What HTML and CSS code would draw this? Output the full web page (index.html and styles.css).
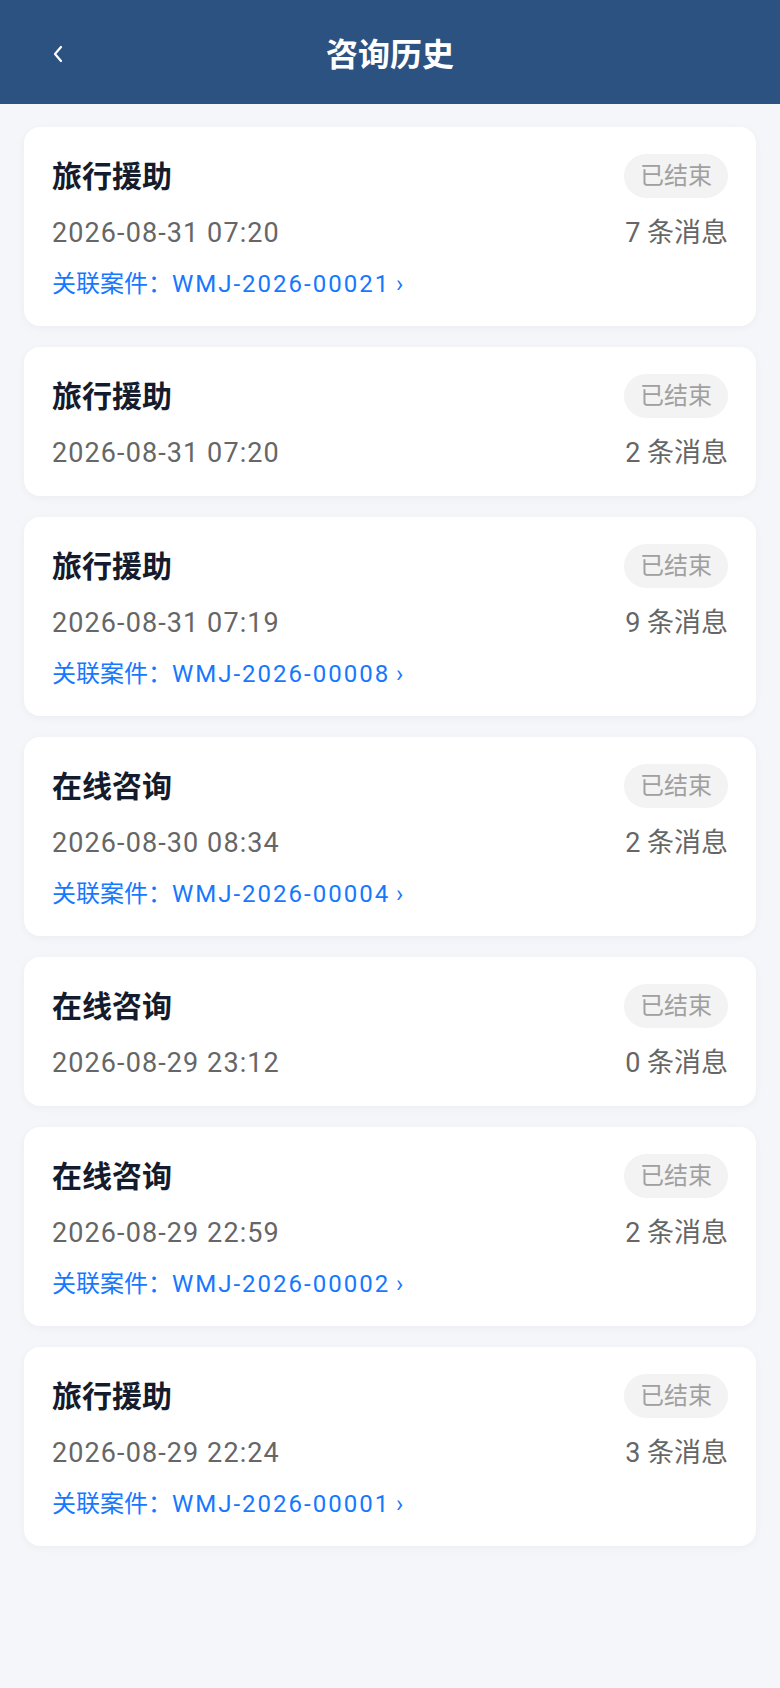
FILE: index.html
```html
<!DOCTYPE html>
<html lang="zh-CN">
<head>
  <meta charset="UTF-8">
  <meta name="viewport" content="width=device-width, initial-scale=1">
  <title>咨询历史</title>
  <link rel="stylesheet" href="styles.css">
</head>
<body>
  <header class="topbar">
    <a class="back" href="#">
      <svg width="12" height="18" viewBox="0 0 12 18"><polyline points="9,2 3,9 9,16" fill="none" stroke="#ffffff" stroke-width="2.2" stroke-linecap="round" stroke-linejoin="round"/></svg>
    </a>
    <h1>咨询历史</h1>
    <span></span>
  </header>

  <main class="list">
    <div class="card">
      <div class="card-head">
        <h2>旅行援助</h2>
        <span class="badge">已结束</span>
      </div>
      <div class="card-meta">
        <span class="time">2026-08-31 07:20</span>
        <span class="count">7 条消息</span>
      </div>
      <a class="case" href="#">关联案件：<span class="code">WMJ-2026-00021</span> ›</a>
    </div>

    <div class="card">
      <div class="card-head">
        <h2>旅行援助</h2>
        <span class="badge">已结束</span>
      </div>
      <div class="card-meta">
        <span class="time">2026-08-31 07:20</span>
        <span class="count">2 条消息</span>
      </div>
    </div>

    <div class="card">
      <div class="card-head">
        <h2>旅行援助</h2>
        <span class="badge">已结束</span>
      </div>
      <div class="card-meta">
        <span class="time">2026-08-31 07:19</span>
        <span class="count">9 条消息</span>
      </div>
      <a class="case" href="#">关联案件：<span class="code">WMJ-2026-00008</span> ›</a>
    </div>

    <div class="card">
      <div class="card-head">
        <h2>在线咨询</h2>
        <span class="badge">已结束</span>
      </div>
      <div class="card-meta">
        <span class="time">2026-08-30 08:34</span>
        <span class="count">2 条消息</span>
      </div>
      <a class="case" href="#">关联案件：<span class="code">WMJ-2026-00004</span> ›</a>
    </div>

    <div class="card">
      <div class="card-head">
        <h2>在线咨询</h2>
        <span class="badge">已结束</span>
      </div>
      <div class="card-meta">
        <span class="time">2026-08-29 23:12</span>
        <span class="count">0 条消息</span>
      </div>
    </div>

    <div class="card">
      <div class="card-head">
        <h2>在线咨询</h2>
        <span class="badge">已结束</span>
      </div>
      <div class="card-meta">
        <span class="time">2026-08-29 22:59</span>
        <span class="count">2 条消息</span>
      </div>
      <a class="case" href="#">关联案件：<span class="code">WMJ-2026-00002</span> ›</a>
    </div>

    <div class="card">
      <div class="card-head">
        <h2>旅行援助</h2>
        <span class="badge">已结束</span>
      </div>
      <div class="card-meta">
        <span class="time">2026-08-29 22:24</span>
        <span class="count">3 条消息</span>
      </div>
      <a class="case" href="#">关联案件：<span class="code">WMJ-2026-00001</span> ›</a>
    </div>
  </main>
</body>
</html>
```

FILE: styles.css
```css
body {
  margin: 0;
  background: #f5f6fa;
  font-family: Roboto, "Noto Sans CJK SC", sans-serif;
  min-height: 1688px;
}

.topbar {
  background: #2c5282;
  height: 104px;
  display: grid;
  grid-template-columns: 1fr auto 1fr;
  align-items: center;
  padding: 0 0 0 52px;
  box-sizing: border-box;
}

.back {
  display: flex;
  align-items: center;
  height: 18px;
  margin-top: 4px;
}

.topbar h1 {
  margin: 0;
  color: #ffffff;
  font-size: 32px;
  font-weight: 600;
  margin-left: -52px;
}

.list {
  padding: 23px 24px;
  display: flex;
  flex-direction: column;
  gap: 21px;
}

.card {
  background: #ffffff;
  border-radius: 16px;
  padding: 27px 28px 25px;
  box-shadow: 0 2px 8px rgba(20, 30, 60, 0.04);
}

.card-head {
  display: flex;
  justify-content: space-between;
  align-items: center;
  height: 44px;
}

.card-head h2 {
  margin: 0 0 5px;
  font-size: 30px;
  font-weight: 700;
  color: #141b2d;
}

.badge {
  background: #f3f3f3;
  color: #a0a0a0;
  font-size: 24px;
  height: 44px;
  line-height: 44px;
  padding: 0 16px;
  border-radius: 22px;
}

.card-meta {
  display: flex;
  justify-content: space-between;
  margin-top: 17px;
  line-height: 36px;
  font-size: 27px;
  color: #666666;
}

.time {
  letter-spacing: 1.1px;
}

.case {
  display: block;
  margin-top: 17px;
  line-height: 33px;
  font-size: 24px;
  color: #1677ff;
  text-decoration: none;
}

.code {
  letter-spacing: 2px;
}
```
